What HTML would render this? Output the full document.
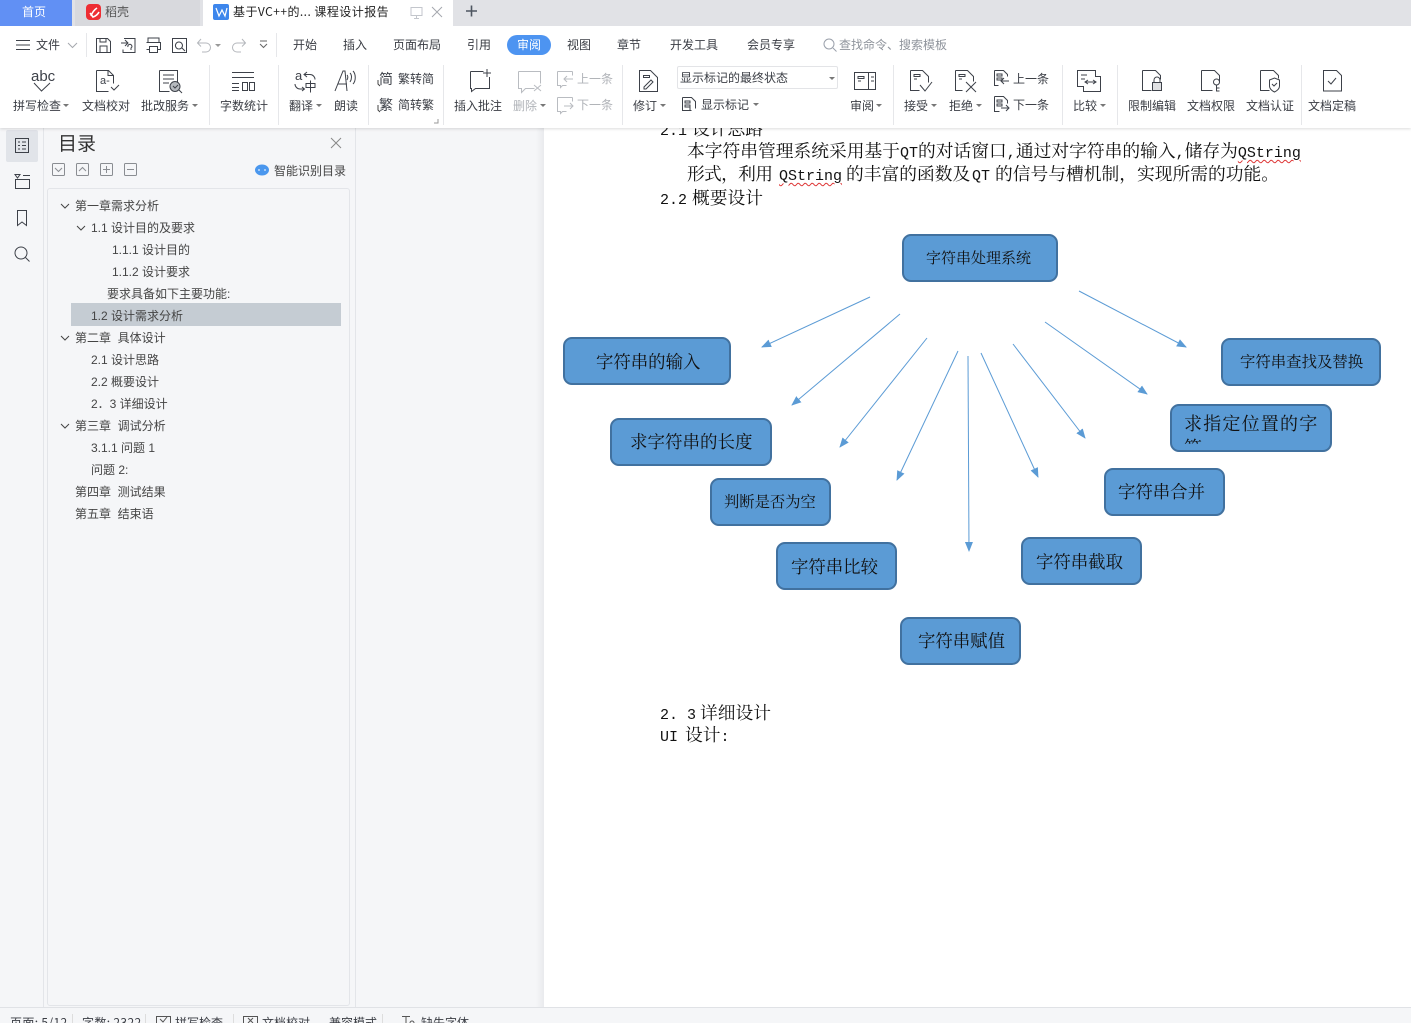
<!DOCTYPE html>
<html lang="zh"><head><meta charset="utf-8"><title>课程设计报告</title>
<style>
html,body{margin:0;padding:0;width:1411px;height:1023px;overflow:hidden;background:#fff}
body{position:relative;font-family:"Liberation Sans","Noto Sans CJK SC",sans-serif;font-size:12px;color:#3a3d44}
.a{position:absolute}
.t{position:absolute;white-space:nowrap;line-height:16px;font-size:12px;font-family:"Noto Sans CJK SC",sans-serif}
.g{color:#b0b3b8}
.c{position:absolute;width:0;height:0;border:3px solid transparent;border-top:3px solid #777;border-bottom:0}
.toc{position:absolute;white-space:nowrap;line-height:16px;font-size:12px;color:#444;font-family:"Liberation Sans","Noto Sans CJK SC",sans-serif}
.doc{position:absolute;white-space:nowrap;font-family:"Noto Serif CJK SC",serif;font-size:17.75px;line-height:24px;color:#111}
.doc i{font-style:normal;font-family:"Liberation Mono",monospace;font-size:15px}
.box{position:absolute;box-sizing:border-box;background:#5b9bd5;border:2px solid #41719f;border-radius:9px;overflow:hidden;font-family:"Noto Serif CJK SC",serif;color:#111}
.box span{position:absolute;white-space:nowrap}
.w{text-decoration:underline wavy #d33 1px;text-underline-offset:2px}
</style></head><body>

<!-- document area -->
<div class="a" style="left:44px;top:128px;width:500px;height:879px;background:#f5f6f8"></div>
<div class="a" style="left:536px;top:128px;width:8px;height:879px;background:linear-gradient(90deg,#f5f6f8,#e9eaed)"></div>
<div class="doc" style="left:660px;top:117px"><i>2.1</i><span style="margin-left:5px">设计思路</span></div>
<div class="doc" style="left:687px;top:139px">本字符串管理系统采用基于<i>QT</i>的对话窗口<i>,</i>通过对字符串的输入<i>,</i>储存为<i class="w">QString</i></div>
<div class="doc" style="left:687px;top:162px;letter-spacing:-.7px">形式，利用</div>
<div class="doc" style="left:779px;top:162px"><i class="w">QString</i></div>
<div class="doc" style="left:846px;top:162px">的丰富的函数及</div>
<div class="doc" style="left:972px;top:162px"><i>QT</i></div>
<div class="doc" style="left:995px;top:162px">的信号与槽机制，实现所需的功能。</div>
<div class="doc" style="left:660px;top:186px"><i>2.2</i><span style="margin-left:5px">概要设计</span></div>
<div class="doc" style="left:660px;top:701px"><i>2. 3</i><span style="margin-left:4px">详细设计</span></div>
<div class="doc" style="left:660px;top:723px"><i>UI</i><span style="margin-left:7px">设计</span><i>:</i></div>

<svg class="a" style="left:0;top:0" width="1411" height="1023" fill="none">
<defs><marker id="m" markerWidth="10" markerHeight="8" refX="9" refY="4" orient="auto" markerUnits="userSpaceOnUse"><path d="M0 0L10 4L0 8Z" fill="#5b9bd5"/></marker></defs>
<g stroke="#5b9bd5" stroke-width="1">
<path d="M870 297L762 347" marker-end="url(#m)"/><path d="M900 314L792 405" marker-end="url(#m)"/><path d="M927 338L840 447" marker-end="url(#m)"/><path d="M958 351L897 480" marker-end="url(#m)"/><path d="M968 356L969 551" marker-end="url(#m)"/><path d="M981 353L1038 477" marker-end="url(#m)"/><path d="M1013 344L1085 438" marker-end="url(#m)"/><path d="M1045 322L1147 394" marker-end="url(#m)"/><path d="M1079 291L1186 347" marker-end="url(#m)"/>
</g></svg>

<div class="box" style="left:902px;top:234px;width:156px;height:48px"><span style="left:22px;top:10px;font-size:15px;line-height:24px">字符串处理系统</span></div>
<div class="box" style="left:563px;top:337px;width:168px;height:48px"><span style="left:31px;top:10px;font-size:17.4px;line-height:24px">字符串的输入</span></div>
<div class="box" style="left:1221px;top:338px;width:160px;height:48px"><span style="left:17px;top:9px;font-size:15.4px;line-height:24px">字符串查找及替换</span></div>
<div class="box" style="left:1170px;top:404px;width:162px;height:48px"><span style="left:12px;top:5px;font-size:18px;line-height:24px;letter-spacing:1.2px;width:139px;height:33px;overflow:hidden;white-space:normal">求指定位置的字符</span></div>
<div class="box" style="left:610px;top:418px;width:162px;height:48px"><span style="left:18px;top:10px;font-size:17.5px;line-height:24px">求字符串的长度</span></div>
<div class="box" style="left:1104px;top:468px;width:121px;height:48px"><span style="left:12px;top:9px;font-size:17.4px;line-height:24px">字符串合并</span></div>
<div class="box" style="left:710px;top:478px;width:121px;height:48px"><span style="left:12px;top:9px;font-size:15.3px;line-height:24px">判断是否为空</span></div>
<div class="box" style="left:776px;top:542px;width:121px;height:48px"><span style="left:13px;top:10px;font-size:17.4px;line-height:24px">字符串比较</span></div>
<div class="box" style="left:1021px;top:537px;width:121px;height:48px"><span style="left:13px;top:10px;font-size:17.4px;line-height:24px">字符串截取</span></div>
<div class="box" style="left:900px;top:617px;width:121px;height:48px"><span style="left:16px;top:9px;font-size:17.4px;line-height:24px">字符串赋值</span></div>

<!-- rail + panel -->
<div class="a" style="left:0;top:128px;width:44px;height:879px;background:#f5f6f8;border-right:1px solid #e3e5e9;box-sizing:border-box"></div>
<div class="a" style="left:44px;top:128px;width:312px;height:879px;background:#f5f6f8;border-right:1px solid #e3e5e9;box-sizing:border-box"></div>
<div class="a" style="left:6px;top:130px;width:32px;height:32px;background:#e1e4e9;border-radius:2px"></div>
<div class="a" style="left:47px;top:188px;width:303px;height:818px;box-sizing:border-box;border:1px solid #e3e5e9;border-radius:3px"></div>
<div class="a" style="left:71px;top:303px;width:270px;height:23px;background:#c5ccd3"></div>
<div class="t" style="left:58px;top:131px;font-size:19px;line-height:24px;color:#333">目录</div>
<div class="t" style="left:274px;top:163px;color:#444">智能识别目录</div>
<div class="toc" style="left:75px;top:198px">第一章需求分析</div>
<div class="toc" style="left:91px;top:220px">1.1 设计目的及要求</div>
<div class="toc" style="left:112px;top:242px">1.1.1 设计目的</div>
<div class="toc" style="left:112px;top:264px">1.1.2 设计要求</div>
<div class="toc" style="left:107px;top:286px">要求具备如下主要功能:</div>
<div class="toc" style="left:91px;top:308px">1.2 设计需求分析</div>
<div class="toc" style="left:75px;top:330px">第二章&nbsp; 具体设计</div>
<div class="toc" style="left:91px;top:352px">2.1 设计思路</div>
<div class="toc" style="left:91px;top:374px">2.2 概要设计</div>
<div class="toc" style="left:91px;top:396px">2．3 详细设计</div>
<div class="toc" style="left:75px;top:418px">第三章&nbsp; 调试分析</div>
<div class="toc" style="left:91px;top:440px">3.1.1 问题 1</div>
<div class="toc" style="left:91px;top:462px">问题 2:</div>
<div class="toc" style="left:75px;top:484px">第四章&nbsp; 测试结果</div>
<div class="toc" style="left:75px;top:506px">第五章&nbsp; 结束语</div>

<!-- ribbon -->
<div class="a" style="left:0;top:26px;width:1411px;height:102px;background:#fff;box-shadow:0 1px 3px rgba(0,0,0,.14)"></div>
<div class="a" style="left:0;top:0;width:1411px;height:26px;background:#e1e2e6"></div>
<div class="a" style="left:0;top:0;width:72px;height:26px;background:#6190f4"></div>
<div class="a" style="left:75px;top:0;width:125px;height:26px;background:#d8d9dd"></div>
<div class="a" style="left:203px;top:0;width:250px;height:26px;background:#fff"></div>
<div class="t" style="left:22px;top:4px;color:#fff">首页</div>
<div class="a" style="left:86px;top:4px;width:15px;height:16px;background:#ee2d33;border-radius:4px"></div>
<div class="t" style="left:105px;top:4px;color:#555">稻壳</div>
<div class="a" style="left:213px;top:4px;width:16px;height:16px;background:#3d86ec;border-radius:2px"></div>
<div class="t" style="left:233px;top:4px;color:#222;letter-spacing:.45px">基于VC++的... 课程设计报告</div>

<div class="t" style="left:36px;top:37px">文件</div>
<div class="t" style="left:293px;top:37px">开始</div>
<div class="t" style="left:343px;top:37px">插入</div>
<div class="t" style="left:393px;top:37px">页面布局</div>
<div class="t" style="left:467px;top:37px">引用</div>
<div class="a" style="left:507px;top:35px;width:44px;height:20px;border-radius:10px;background:#4d94f1"></div>
<div class="t" style="left:517px;top:37px;color:#fff">审阅</div>
<div class="t" style="left:567px;top:37px">视图</div>
<div class="t" style="left:617px;top:37px">章节</div>
<div class="t" style="left:670px;top:37px">开发工具</div>
<div class="t" style="left:747px;top:37px">会员专享</div>
<div class="t" style="left:839px;top:37px;color:#8f949c">查找命令、搜索模板</div>

<div class="t" style="left:13px;top:98px">拼写检查</div><div class="c" style="left:63px;top:104px"></div>
<div class="t" style="left:82px;top:98px">文档校对</div>
<div class="t" style="left:141px;top:98px">批改服务</div><div class="c" style="left:192px;top:104px"></div>
<div class="t" style="left:220px;top:98px">字数统计</div>
<div class="t" style="left:289px;top:98px">翻译</div><div class="c" style="left:316px;top:104px"></div>
<div class="t" style="left:334px;top:98px">朗读</div>
<div class="t" style="left:398px;top:71px">繁转简</div>
<div class="t" style="left:398px;top:97px">简转繁</div>
<div class="t" style="left:454px;top:98px">插入批注</div>
<div class="t g" style="left:513px;top:98px">删除</div><div class="c" style="left:540px;top:104px"></div>
<div class="t g" style="left:577px;top:71px">上一条</div>
<div class="t g" style="left:577px;top:97px">下一条</div>
<div class="t" style="left:633px;top:98px">修订</div><div class="c" style="left:660px;top:104px"></div>
<div class="a" style="left:677px;top:66px;width:161px;height:23px;box-sizing:border-box;border:1px solid #e3e4e7;border-radius:2px"></div>
<div class="t" style="left:680px;top:70px">显示标记的最终状态</div><div class="c" style="left:829px;top:77px"></div>
<div class="t" style="left:701px;top:97px">显示标记</div><div class="c" style="left:753px;top:103px"></div>
<div class="t" style="left:850px;top:98px">审阅</div><div class="c" style="left:876px;top:104px"></div>
<div class="t" style="left:904px;top:98px">接受</div><div class="c" style="left:931px;top:104px"></div>
<div class="t" style="left:949px;top:98px">拒绝</div><div class="c" style="left:976px;top:104px"></div>
<div class="t" style="left:1013px;top:71px">上一条</div>
<div class="t" style="left:1013px;top:97px">下一条</div>
<div class="t" style="left:1073px;top:98px">比较</div><div class="c" style="left:1100px;top:104px"></div>
<div class="t" style="left:1128px;top:98px">限制编辑</div>
<div class="t" style="left:1187px;top:98px">文档权限</div>
<div class="t" style="left:1246px;top:98px">文档认证</div>
<div class="t" style="left:1308px;top:98px">文档定稿</div>

<!-- icons -->
<svg class="a" style="left:0;top:0" width="1411" height="1023" fill="none" stroke="#3d4149" stroke-width="1">
<!-- dividers -->
<g stroke="#e6e7ea"><path d="M86.500 33V57M276.500 33V57M209.500 65V125M278.500 65V125M368.500 65V125M443.500 65V125M622.500 65V125M893.500 65V125M1062.500 65V125M1117.500 65V125M1301.500 65V125"/></g>
<!-- tab -->
<path d="M216 8l3 8 3-6 3 6 2-8" stroke="#fff" stroke-width="1.200"/>
<path d="M91 16c1-3 3-6 6-8M90 13l3 4c3-1 5-3 6-5" stroke="#fff" stroke-width="1.600"/>
<g stroke="#c3c6cc"><path d="M411 7.500h11v8h-11zM416.500 15.500v3M414 18.500h5"/><path d="M432 7l10 10M442 7L432 17" stroke="#a5a8ae"/></g>
<path d="M466 11h11M471.500 5.500v11" stroke="#4e5560" stroke-width="1.600"/>
<!-- qat -->
<path d="M16 40.500h14M16 45h14M16 49.500h14"/>
<path d="M68 43l4.500 4.500L77 43" stroke="#a5a8ae"/>
<path d="M96.500 38.500h11l3 3v11h-14zM100 52v-6h7v6M100 39v3h6v-3"/>
<path d="M121 43h7M125 40l3 3-3 3M124 38.500h11v14h-12v-3M128 47a2 2 0 1 1 3 1v2"/>
<path d="M148 42v-4h11v4M146.500 42.500h14v7h-3M149 49.500h-2.500M149.500 46.500h8v6h-8z"/>
<path d="M172.500 38.500h14v14h-14zM179 49a3.500 3.500 0 1 0-.1 0M182 48l3 3"/>
<g stroke="#b4b7bc"><path d="M198 43h8a4.500 4.500 0 0 1 0 9h-4M201 39l-3.500 4 3.500 3.500"/><path d="M245 43h-8a4.500 4.500 0 0 0 0 9h4M242 39l3.500 4-3.500 3.500"/></g>
<path d="M215 44h6l-3 3z" fill="#999" stroke="none"/>
<path d="M260 41h7M260 44l3.500 3.500L267 44" stroke="#666"/>
<circle cx="829" cy="44" r="5" stroke="#9aa0ab"/><path d="M833 48l3.500 3.500" stroke="#9aa0ab"/>
<!-- 拼写检查 -->
<text x="31" y="81" font-family="Liberation Sans" font-size="15" fill="#3d4149" stroke="none">abc</text>
<path d="M34 83l7.500 8L50 83"/>
<!-- 文档校对 -->
<path d="M96.500 70.500h12l5 5v8M108 70.500v5h5.500M96.500 70.500v21h12M111 87l3 3 5-5"/>
<text x="100" y="84" font-family="Liberation Sans" font-size="11" fill="#3d4149" stroke="none">a-</text>
<!-- 批改服务 -->
<path d="M159.500 70.500h18v12M159.500 70.500v21h10M163 75h11M163 79h11M163 83h6"/>
<circle cx="175" cy="86.500" r="5" fill="#b5b9be"/><path d="M179 90l3 3M173 86l2 2 3-3"/>
<!-- 字数统计 -->
<path d="M232 72.500h22M232 77.500h22M232 83.500h7M232 87.500h7M242.500 82.500h5v8h-5zM249.500 82.500h5v8h-5zM232 90.500h7"/>
<!-- 翻译 -->
<text x="295" y="80" font-family="Liberation Sans" font-size="13" fill="#3d4149" stroke="none">a</text>
<path d="M307 72l-3 2.500 3 2.500M304 74.500h6a5 5 0 0 1 5 5M306 83.500h9v4h-9zM310.500 80.500v12M295 84a5 5 0 0 0 5 5h4M302 87l2.500 2-2.500 2"/>
<!-- 朗读 -->
<path d="M335 91l8-20h2l2 20M338 84h9M350 73c2 2 2 6 0 9M353 71c3 3 3 10 0 13M347 75c1 1 1 3 0 5"/>
<!-- 繁简 -->
<text x="379" y="84" font-family="Noto Sans CJK SC" font-size="14" fill="#3d4149" stroke="none">简</text>
<text x="379" y="110" font-family="Noto Sans CJK SC" font-size="14" fill="#3d4149" stroke="none">繁</text>
<path d="M378 80v4l2 2M378 105v5l2 2" stroke="#444"/>
<path d="M434 123h4v-4" stroke="#999"/>
<!-- 插入批注 -->
<path d="M470.500 71.500h13M489.500 77v11.500h-14l-4 3v-3h-1V71.500M487 69v8M483 73h8"/>
<!-- 删除 -->
<g stroke="#b9bcc1"><path d="M518.500 71.500h22v12M518.500 71.500v17h3v4l4-4h9M534 85l7 6M541 85l-7 6"/>
<path d="M557.500 71.500h15M572.500 71.500v4M557.500 71.500v14h3v2l2-2h4M573 79h-9M567 76l-3 3 3 3"/>
<path d="M557.500 97.500h15M572.500 97.500v4M557.500 97.500v14h3v2l2-2h4M564 106h9M570 103l3 3-3 3"/></g>
<!-- 修订 -->
<path d="M639.500 70.500h11l7 7v14h-18zM643.500 75.500h6v2h-6zM644 87l7-7 2 2-7 7h-2z"/>
<!-- 显示标记 -->
<path d="M682.500 97.500h9l4 4v7M682.500 97.500v13h9M685 101h5v2h-5zM685 105h5v2h-5zM690 110v-4"/>
<!-- 审阅 -->
<path d="M854.500 72.500h21v17h-21zM868.500 72.500v17M858 76.500h6v2h-6zM858 81h3M871 77h3M871 81h3"/>
<!-- 接受 -->
<path d="M910.500 70.500h12l6 6v6M910.500 70.500v20h9M914 74.500h6v2h-6zM914 79h3M920 85l5 6 7-9"/>
<!-- 拒绝 -->
<path d="M955.500 70.500h12l6 6v5M955.500 70.500v20h7M959 74.500h6v2h-6zM959 79h3M966 82l10 10M976 82l-10 10"/>
<!-- 上下一条 -->
<path d="M994.500 70.500h9l4 4v2M994.500 70.500v15h4M997 74h5v2h-5zM997 78h5v2h-5zM1009 81h-8M1004 78l-3 3 3 3"/>
<path d="M994.500 96.500h9l4 4v3M994.500 96.500v15h5M997 100h5v2h-5zM997 104h5v2h-5zM1001 108h8M1006 105l3 3-3 3"/>
<!-- 比较 -->
<path d="M1077.500 70.500h18v6h5v15h-17v-5h-6zM1081 75h6M1081 79h4M1085 82h11M1088 80l-3 2 3 2M1093 80l3 2-3 2"/>
<!-- 限制编辑 -->
<path d="M1142.500 70.500h13l5 5v4M1142.500 70.500v20h9"/>
<path d="M1152.500 82.500h9v8h-9z" fill="#e0e1e3"/><path d="M1154 82v-2a3 3 0 0 1 6 0v2"/>
<!-- 文档权限 -->
<path d="M1201.500 70.500h13l5 5v7M1201.500 70.500v20h11"/><circle cx="1216.500" cy="82" r="3"/><path d="M1216.500 85v6h3M1216.500 88h3"/>
<!-- 文档认证 -->
<path d="M1260.500 70.500h13l5 5v3M1260.500 70.500v20h9"/><path d="M1269.500 80l5-2 5 2v6c0 3-3 5-5 6-2-1-5-3-5-6z"/><path d="M1272 84l2 2 3-3"/>
<!-- 文档定稿 -->
<path d="M1323.500 70.500h13l5 5v15.500h-18zM1328 81l3 3 5-6"/>
<!-- rail -->
<path d="M15.500 138.500h13v14h-13zM18 142h2M22 142h4M18 145.500h2M22 145.500h4M18 149h2M22 149h4"/>
<path d="M15 174.500h5l-2.500 3.500zM23 175.500h7M15.500 179.500h14v9h-14zM15.500 179v9"/>
<path d="M17.500 210.500h9v15l-4.500-3.500-4.500 3.500z"/>
<circle cx="21" cy="253" r="6"/><path d="M25.500 257.500l4 4"/>
<!-- panel -->
<path d="M331 138l10 10M341 138l-10 10" stroke="#888"/>
<g stroke="#8a8d92"><rect x="52.500" y="163.500" width="12" height="12" rx="1"/><rect x="76.500" y="163.500" width="12" height="12" rx="1"/><rect x="100.500" y="163.500" width="12" height="12" rx="1"/><rect x="124.500" y="163.500" width="12" height="12" rx="1"/>
<path d="M55 168l3.500 3.500L62 168M79 171l3.500-3.500L86 171M103 169.500h7M106.500 166v7M127 169.500h7"/></g>
<ellipse cx="262" cy="170" rx="7" ry="5.500" fill="#4a97ee" stroke="none"/><path d="M258 170h2M264 170h2" stroke="#fff"/>
<!-- tree chevrons -->
<g stroke="#444"><path d="M61 204l4 4 4-4M77 226l4 4 4-4M61 336l4 4 4-4M61 424l4 4 4-4"/></g>
</svg>

<!-- status -->
<div class="a" style="left:0;top:1007px;width:1411px;height:16px;background:#f5f6f8;border-top:1px solid #e0e2e6;box-sizing:border-box;overflow:hidden">
<div class="t" style="left:10px;top:7px;letter-spacing:.35px">页面: 5/12</div>
<div class="t" style="left:82px;top:7px;letter-spacing:.35px">字数: 2322</div>
<div class="t" style="left:175px;top:7px">拼写检查</div>
<div class="t" style="left:262px;top:7px">文档校对</div>
<div class="t" style="left:329px;top:7px">兼容模式</div>
<div class="t" style="left:421px;top:7px">缺失字体</div>
<svg class="a" style="left:0;top:0" width="520" height="16" fill="none" stroke="#555"><path d="M72.500 6v10M145.500 6v10M233.500 6v10M382.500 6v10" stroke="#ddd"/><path d="M156.500 8.500h14v10h-14zM160 11l3 3 4-5M243.500 8.500h14v10h-14zM248 10l5 5M253 10l-5 5M402 8.500h8M406 8.500v8"/><circle cx="412" cy="15" r="2"/></svg>
</div>
</body></html>
